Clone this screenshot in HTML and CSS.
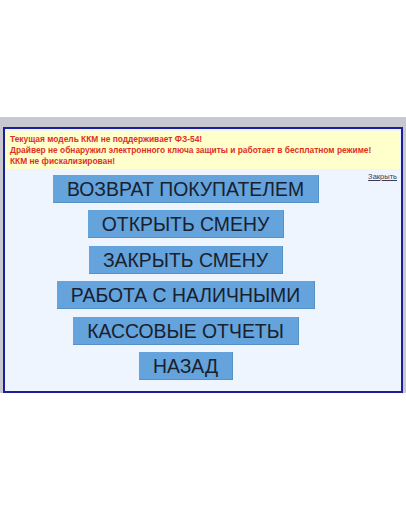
FILE: index.html
```
<!DOCTYPE html>
<html lang="ru">
<head>
<meta charset="utf-8">
<link rel="stylesheet" href="styles.css">
</head>
<body>
<div class="desk">
  <div class="frame">
    <div class="notice">
      <div>Текущая модель ККМ не поддерживает ФЗ-54!</div>
      <div>Драйвер не обнаружил электронного ключа защиты и работает в бесплатном режиме!</div>
      <div>ККМ не фискализирован!</div>
    </div>
    <div class="content">
      <div class="menu">
        <div class="btn">ВОЗВРАТ ПОКУПАТЕЛЕМ</div>
        <div class="btn">ОТКРЫТЬ СМЕНУ</div>
        <div class="btn">ЗАКРЫТЬ СМЕНУ</div>
        <div class="btn">РАБОТА С НАЛИЧНЫМИ</div>
        <div class="btn">КАССОВЫЕ ОТЧЕТЫ</div>
        <div class="btn">НАЗАД</div>
      </div>
      <div class="aside"><a class="close" href="#">Закрыть</a></div>
    </div>
  </div>
</div>
</body>
</html>
```
FILE: styles.css
```
html, body {
  margin: 0;
  padding: 0;
  background: #ffffff;
}
body {
  font-family: "Liberation Sans", Arial, sans-serif;
  width: 406px;
  height: 516px;
}
.desk {
  margin-top: 117px;
  background: #c8c8d0;
  padding: 10px 3px 0 3px;
}
.frame {
  border: 2px solid #1e1e96;
  background: #eff5ff;
  padding: 2px 1px 0 1px;
  height: 260px;
  box-sizing: content-box;
}
.notice {
  background: #ffffcc;
  color: #e0301e;
  font-weight: bold;
  font-size: 8.4px;
  line-height: 11px;
  padding: 3px 4px 2px 4px;
}
.content {
  display: flex;
  margin-top: 2px;
}
.menu {
  flex: 1;
  display: flex;
  flex-direction: column;
  align-items: center;
  gap: 7.4px;
  padding-top: 4px;
}
.btn {
  background: #64a3db;
  border-right: 1px solid #5590c8;
  border-bottom: 1px solid #5590c8;
  color: #19202e;
  font-size: 19.4px;
  height: 28px;
  line-height: 28px;
  padding: 0 14px;
  box-sizing: border-box;
  white-space: nowrap;
}
.aside {
  width: 31px;
  text-align: right;
  padding-right: 3px;
  font-size: 7.5px;
  line-height: 9px;
  padding-top: 1px;
}
.close {
  color: #3a3a5a;
  text-decoration: underline;
}
```
